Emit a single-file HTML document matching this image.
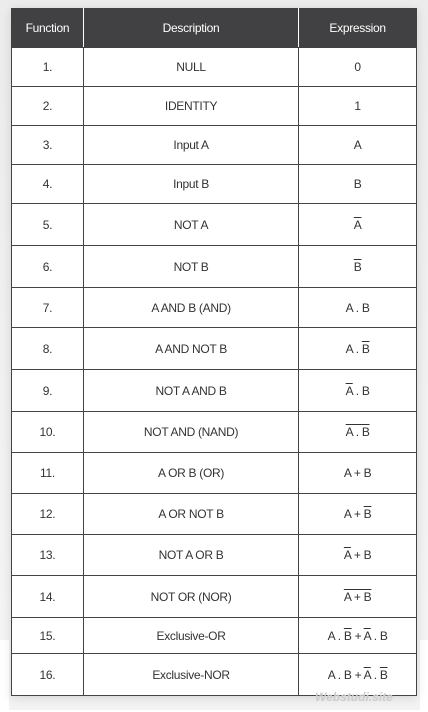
<!DOCTYPE html>
<html><head><meta charset="utf-8"><style>
body{margin:0;width:428px;height:712px;background:#fff;font-family:"Liberation Sans",sans-serif;position:relative;overflow:hidden}
.bg{position:absolute;left:0;top:0;width:428px;height:640px;background:linear-gradient(#ececec,#f4f4f4)}
.bg2{position:absolute;left:9px;top:640px;width:411px;height:70px;background:#f3f3f3}
table{position:absolute;left:11px;top:8px;border-collapse:collapse;width:406px;background:#fff;font-size:12px;color:#333;box-shadow:0 2px 10px rgba(0,0,0,.12)}
td,th{border:1px solid #444;text-align:center;padding:0;letter-spacing:-0.3px}
th{background:#414143;color:#fff;font-weight:normal;height:38px;border-color:#414143;border-right:1px solid #fff}
th:last-child{border-right-color:#414143}
.o{text-decoration:overline}
.wm{position:absolute;left:315px;top:690px;font-size:12px;font-weight:bold;font-style:italic;color:#ccc}
</style></head><body>
<div class="bg"></div><div class="bg2"></div>
<table>
<colgroup><col style="width:72px"><col style="width:216px"><col style="width:118px"></colgroup>
<tr><th>Function</th><th>Description</th><th>Expression</th></tr>
<tr style="height:39px"><td>1.</td><td>NULL</td><td>0</td></tr>
<tr style="height:39px"><td>2.</td><td>IDENTITY</td><td>1</td></tr>
<tr style="height:39px"><td>3.</td><td>Input A</td><td>A</td></tr>
<tr style="height:39px"><td>4.</td><td>Input B</td><td>B</td></tr>
<tr style="height:42px"><td>5.</td><td>NOT A</td><td><span class="o">A</span></td></tr>
<tr style="height:42px"><td>6.</td><td>NOT B</td><td><span class="o">B</span></td></tr>
<tr style="height:40px"><td>7.</td><td>A AND B (AND)</td><td>A . B</td></tr>
<tr style="height:42px"><td>8.</td><td>A AND NOT B</td><td>A . <span class="o">B</span></td></tr>
<tr style="height:42px"><td>9.</td><td>NOT A AND B</td><td><span class="o">A</span> . B</td></tr>
<tr style="height:41px"><td>10.</td><td>NOT AND (NAND)</td><td><span class="o">A . B</span></td></tr>
<tr style="height:41px"><td>11.</td><td>A OR B (OR)</td><td>A + B</td></tr>
<tr style="height:41px"><td>12.</td><td>A OR NOT B</td><td>A + <span class="o">B</span></td></tr>
<tr style="height:41px"><td>13.</td><td>NOT A OR B</td><td><span class="o">A</span> + B</td></tr>
<tr style="height:42px"><td>14.</td><td>NOT OR (NOR)</td><td><span class="o">A + B</span></td></tr>
<tr style="height:36px"><td>15.</td><td>Exclusive-OR</td><td>A . <span class="o">B</span> + <span class="o">A</span> . B</td></tr>
<tr style="height:42px"><td>16.</td><td>Exclusive-NOR</td><td>A . B + <span class="o">A</span> . <span class="o">B</span></td></tr>
</table>
<div class="wm">Webstudi.site</div>
</body></html>
